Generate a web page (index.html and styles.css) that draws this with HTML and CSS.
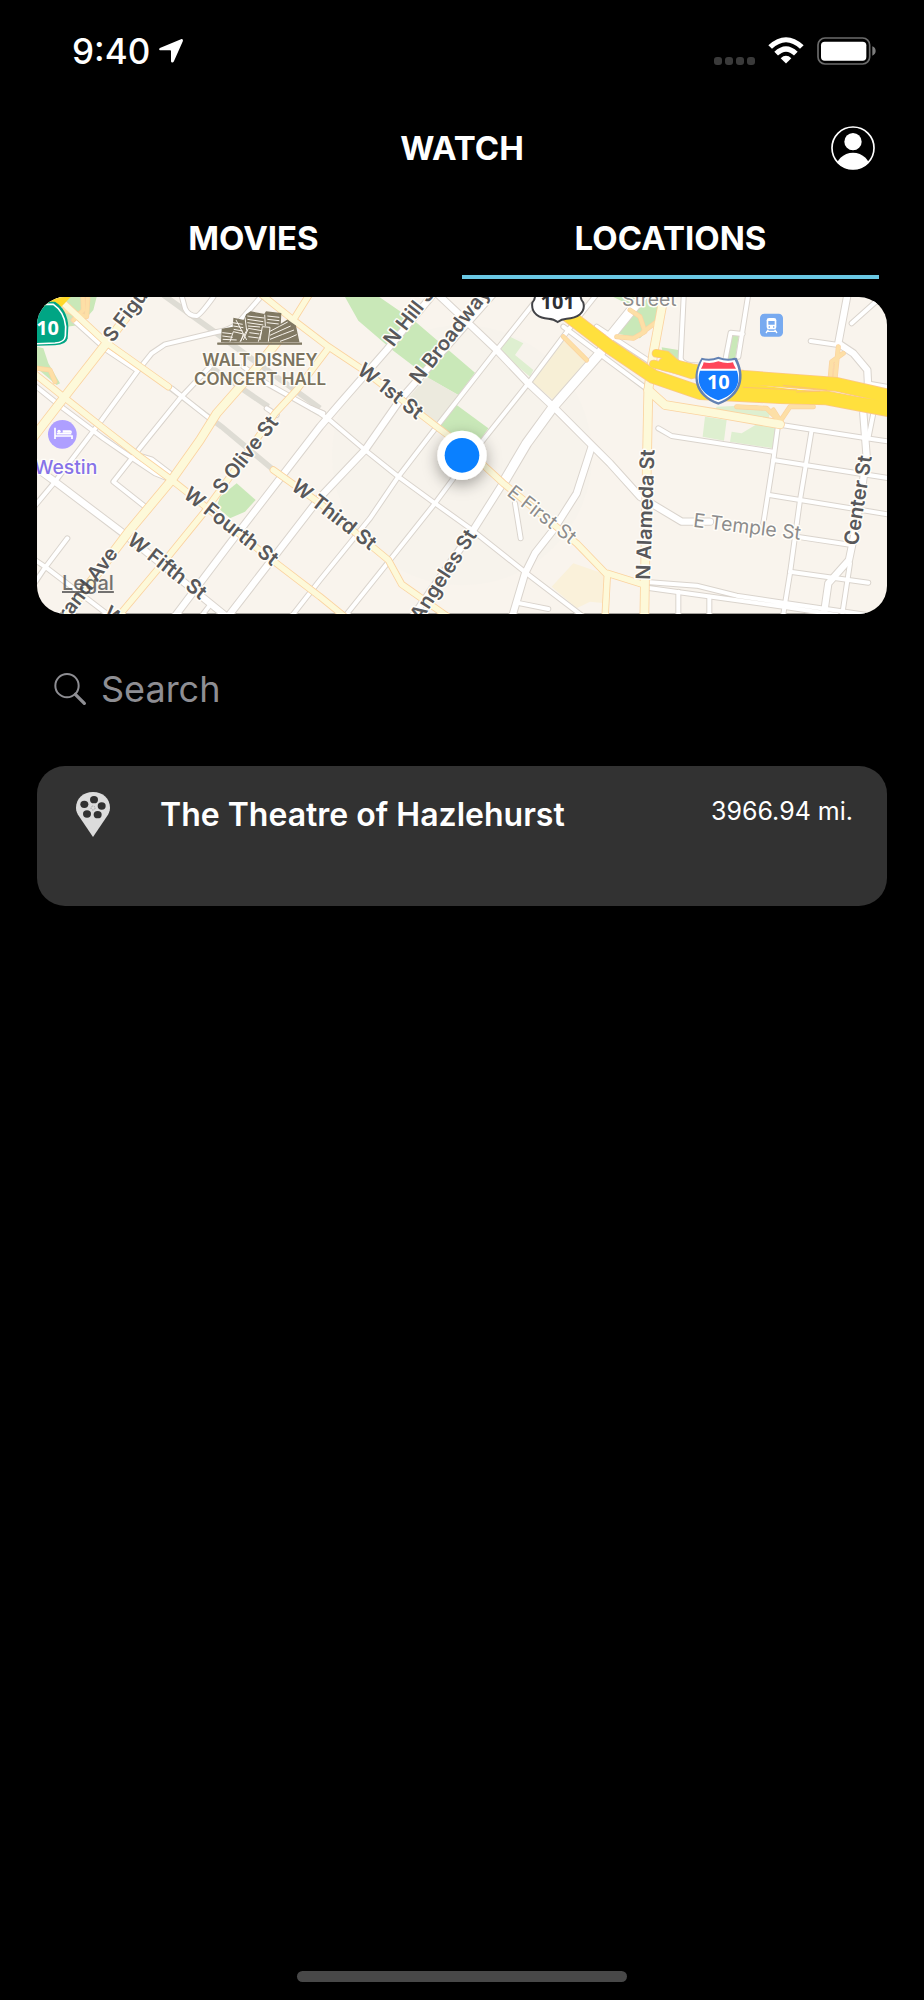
FILE: index.html
```html
<!DOCTYPE html>
<html lang="en">
<head>
    <meta charset="UTF-8">
    <meta name="viewport" content="width=device-width, initial-scale=1">
    <title>Watch - Locations</title>
    <link rel="stylesheet" href="styles.css">
</head>
<body>
    <div class="status-bar">
        <div class="clock">
            <span>9:40</span>
            <svg width="24" height="24" viewBox="0 0 24 24" fill="#fff" aria-hidden="true">
                <path d="M22 .2 1.5 8.8C-.5 9.700 0 11.300 1.500 11.300H11.200Q12 11.300 12 12.200V22C12 23.700 14 24.100 14.800 22.400L23.800 2.200C24.300.8 23.300-.3 22 .2Z"/>
            </svg>
        </div>
        <div class="indicators">
            <div class="signal"><i></i><i></i><i></i><i></i></div>
            <svg width="36" height="27" viewBox="0 0 108 80" aria-hidden="true">
                <path d="M1 24Q54-24 107 24L96 35Q54-4 12 35Z" fill="#fff"/>
                <path d="M19 44Q54 11 89 44L78 55Q54 32 30 55Z" fill="#fff"/>
                <path d="M38 63Q54 49 70 63L54 79Z" fill="#fff"/>
            </svg>
            <svg width="59" height="28" viewBox="0 0 177 84" aria-hidden="true">
                <rect x="3" y="3" width="155" height="78" rx="21" fill="none" stroke="#6b6b6b" stroke-width="5"/>
                <rect x="12" y="14" width="136" height="57" rx="11" fill="#fff"/>
                <path d="M166 28Q176 32 176 42T166 56Z" fill="#7d7d7d"/>
            </svg>
        </div>
    </div>

    <header class="header">
        <h1>WATCH</h1>
        <button type="button" class="profile" aria-label="Profile">
            <svg width="44" height="44" viewBox="0 0 132 132" aria-hidden="true">
                <clipPath id="avatar"><circle cx="66" cy="66" r="64"/></clipPath>
                <circle cx="66" cy="66" r="63" fill="none" stroke="#fff" stroke-width="5"/>
                <g clip-path="url(#avatar)" fill="#fff">
                    <circle cx="66" cy="47" r="26"/>
                    <circle cx="66" cy="133" r="53"/>
                </g>
            </svg>
        </button>
    </header>

    <nav class="tabs">
        <a href="#movies">MOVIES</a>
        <a href="#locations" class="active">LOCATIONS</a>
    </nav>

    <main>
        <div class="map">
            <svg viewBox="21 21 2550 950" role="img" aria-label="Map of downtown Los Angeles">
                <defs>
                    <filter id="shadow" x="-50%" y="-50%" width="200%" height="200%">
                        <feDropShadow dx="0" dy="14" stdDeviation="22" flood-color="#000" flood-opacity=".35"/>
                    </filter>
                    <g id="minor">
                        <path d="M450 0 465 55Q475 78 500 78Q510 76 550 21"/>
                        <path d="M710 0 625 98Q600 120 560 126L405 163 365 190 325 240 215 390 75 575 0 665"/>
                        <path d="M540 230 450 325 325 480 250 575 345 650"/>
                        <path d="M130 90 230 180 320 240M425 295 545 390M0 275 100 355 220 445 300 500 375 550 425 570"/>
                        <path d="M320 495 365 508 420 550"/>
                        <path d="M112 745 40 840 0 900M0 800 45 830 230 971M540 945 520 971"/>
                        <path d="M640 230 710 280 870 370 905 395 1005 480 1105 560 1215 640 1320 715 1490 850 1660 980"/>
                        <path d="M710 355 740 375M845 355 880 370"/>
                        <path d="M780 985 870 870 1020 685 1105 560 1220 410 1400 180 1515 35"/>
                        <path d="M940 985 1080 810 1215 640 1300 525 1495 280 1615 120 1710 0"/>
                        <path d="M1455 640 1472 745M1470 940 1555 957"/>
                        <path d="M1600 110 1740 215 1855 300M1700 110 1860 215"/>
                        <path d="M1962 0 1952 205Q1955 220 1980 225L2030 228M2085 215 2102 128 2138 132M2157 0 2125 200"/>
                        <path d="M2342 153 2425 165M2465 100 2560 15M2510 280 2580 292"/>
                        <path d="M2240 403 2510 445 2580 455M2245 400 2230 510 2200 700"/>
                        <path d="M2345 420 2310 630 2280 850 2258 985M1885 415 1925 438 2230 485"/>
                        <path d="M2230 510 2580 565M2218 615 2580 674M2280 845 2515 878"/>
                        <path d="M1840 875 2000 887 2120 917 2260 938 2580 985M1840 892 2260 950 2420 975"/>
                        <path d="M1945 905V985M2038 920V985M2530 370 2515 445M2460 820 2435 985M2300 740 2465 765"/>
                    </g>
                    <g id="major">
                        <path d="M0 520 75 575 280 730 540 940 590 980"/>
                        <path d="M430 985 600 760 870 410 930 340 1070 180 1220 0"/>
                        <path d="M590 985 870 622 1005 480 1110 330 1320 90 1400 0"/>
                        <path d="M1210 0 1300 85 1400 180 1495 280 1575 355 1690 470 1740 520 1830 620 1955 695 2040 695"/>
                        <path d="M1685 470 1640 610 1570 720 1515 790 1485 850 1445 985"/>
                        <path d="M2455 0 2425 160 2470 190 2512 240 2515 300M2500 370 2510 500 2480 700 2457 810 2395 880 2380 985"/>
                        <path d="M1145 985 1330 720 1425 570"/>
                    </g>
                    <g id="wide">
                        <path d="M1425 570 1490 460 1570 350 1710 190 1740 140 1845 10"/>
                    </g>
                    <g id="arterial">
                        <path d="M85 25 225 155 415 290"/>
                        <path d="M690 10 790 90 895 170 1000 240 1220 410 1300 470 1420 580 1640 760 1732 855 1725 985M1732 850 1845 885"/>
                        <path d="M790 90 840 10M260 985 390 830 520 670 600 560 735 370 800 300 895 175"/>
                        <path d="M730 540 870 640 1075 810 1115 883 1260 985"/>
                        <path d="M0 240 100 320 220 415 330 500 425 570 520 645 700 790 870 920 950 985"/>
                    </g>
                    <g id="avenue">
                        <path d="M0 455 100 325 225 165 350 0"/>
                        <path d="M100 985 300 720 425 570 510 450 560 370 670 245 790 95"/>
                        <path d="M1905 0 1870 190 1855 300 1850 560 1843 985"/>
                        <path d="M1855 300 1905 345 2060 370 2250 403"/>
                    </g>
                    <g id="ramps">
                        <path d="M158 0 160 60 130 90M175 0 170 80 100 60M21 235 60 240 75 275"/>
                        <path d="M1760 140 1810 145 1845 125 1830 80 1800 60M1840 125 1880 95M1600 140 1670 210"/>
                        <path d="M2400 270 2405 215 2440 190M2415 270 2425 170M2120 350 2210 355 2250 395 2280 350 2350 350M2230 360 2255 400"/>
                    </g>
                    <g id="freeway">
                        <path d="M1600 65 1740 172 1870 260 2010 308 2250 320 2390 324 2590 362"/>
                        <path d="M1905 222 1990 243 2140 262 2420 283 2590 322"/>
                    </g>
                    <g id="connector">
                        <path d="M1870 222 1925 235 1985 255M1878 190 1910 195 1960 240"/>
                    </g>
                </defs>

                <!-- land, parks and plazas -->
                <rect x="21" y="21" width="2550" height="950" fill="#f9f4ed"/>
                <circle cx="1296" cy="496" r="390" fill="#f7f3ec"/>
                <g fill="#c9e8b8">
                    <path d="M945 21H1048L1160 98 1335 248 1285 315 1190 262 1155 232 1090 182 985 92Z"/>
                    <path d="M1280 345 1375 415 1330 480 1230 405Z"/>
                    <path d="M570 620 620 580 677 630 645 665 600 685 560 650Z"/>
                    <path d="M21 170 40 175 55 220 90 280 80 285 21 235ZM90 21 200 21 190 60 150 105 110 110Z"/>
                    <path d="M1750 21H1900L1880 95 1830 145 1755 130 1810 50ZM1895 172 1945 180 1955 225 1900 200Z"/>
                    <path d="M2105 135H2127L2115 210H2090Z"/>
                </g>
                <g fill="#deefd0">
                    <path d="M1430 135 1480 160 1455 195 1510 240 1500 260 1410 185Z"/>
                    <path d="M2025 380 2090 390 2082 452 2018 440ZM2105 425 2135 430 2180 403 2242 410 2230 475 2100 455ZM2060 350 2180 345 2222 365 2215 388 2050 370Z"/>
                </g>
                <path d="M1595 150 1660 190 1685 225 1570 330 1505 275Z" fill="#f7efd6"/>
                <path d="M1565 890 1630 820 1732 855 1725 940 1680 935 1640 955Z" fill="#faf1da"/>
                <path d="M1190 260 1285 315 1225 400 1130 330Z" fill="#eceade"/>

                <!-- tunnels -->
                <path d="M400 15 560 130 870 355M540 230 715 350M415 290 575 410 725 535" fill="none" stroke="#dedcd4" stroke-width="17"/>

                <!-- roads, each drawn as a casing with the surface over it -->
                <g fill="none" stroke-linecap="round" stroke-linejoin="round">
                    <g stroke="#dad4cd">
                        <use href="#minor" stroke-width="18"/>
                        <use href="#major" stroke-width="25"/>
                        <use href="#wide" stroke-width="33"/>
                    </g>
                    <g stroke="#fff">
                        <use href="#minor" stroke-width="12"/>
                        <use href="#major" stroke-width="19"/>
                        <use href="#wide" stroke-width="27"/>
                    </g>
                    <g stroke="#fbd3a0">
                        <use href="#ramps" stroke-width="15"/>
                        <use href="#arterial" stroke-width="22"/>
                        <use href="#avenue" stroke-width="29"/>
                    </g>
                    <use href="#ramps" stroke="#fddfa6" stroke-width="11"/>
                    <g stroke="#fdf9d9">
                        <use href="#arterial" stroke-width="17"/>
                        <use href="#avenue" stroke-width="24"/>
                    </g>
                    <g stroke="#fbc887">
                        <use href="#freeway" stroke-width="44"/>
                        <use href="#connector" stroke-width="26"/>
                    </g>
                    <path d="M2130 288 2580 344" stroke="#ffe03d" stroke-width="20"/>
                    <g stroke="#ffe03d">
                        <use href="#freeway" stroke-width="39"/>
                        <use href="#connector" stroke-width="21"/>
                    </g>
                    <path d="M2140 292 2300 300M2260 286 2390 300M2300 306 2370 304" stroke="#fbc46f" stroke-width="3"/>
                </g>
                <path d="M21 21H122L90 55 21 50Z" fill="#ffd928"/>

                <!-- street names -->
                <g class="street">
                    <text transform="translate(248 160) rotate(-53)">S Figu</text>
                    <text transform="translate(577 616) rotate(-52)">S Olive St</text>
                    <text transform="translate(457 620) rotate(38)">W Fourth St</text>
                    <text transform="translate(288 758) rotate(38)">W Fifth St</text>
                    <text transform="translate(780 596) rotate(38)">W Third St</text>
                    <text transform="translate(266 791) rotate(-53)" text-anchor="end">rand Ave</text>
                    <text transform="translate(216 977) rotate(38)">W</text>
                    <text transform="translate(1090 173) rotate(-52)">N Hill S</text>
                    <text transform="translate(1168 286) rotate(-52)">N Broadway</text>
                    <text transform="translate(978 248) rotate(38)">W 1st St</text>
                    <text transform="translate(1342 735) rotate(-57)" text-anchor="end">Angeles St</text>
                    <text transform="translate(1860 870) rotate(-88)">N Alameda St</text>
                    <text transform="translate(2483 768) rotate(-81)">Center St</text>
                </g>
                <g class="street light">
                    <text transform="translate(1428 614) rotate(38)">E First St</text>
                    <text transform="translate(1988 710) rotate(7)">E Temple St</text>
                    <text x="1776" y="47">Street</text>
                </g>

                <!-- concert hall -->
                <g>
                    <path d="M562 162H816M575 155 577 118 610 112 612 86 642 92 650 74 662 66 704 74 709 66 752 71 750 105 772 91 796 108 806 155Z" fill="#817963" stroke="#817963" stroke-width="4"/>
                    <g fill="none" stroke="#f9f4ed" stroke-width="3">
                        <path d="M577 128 605 131M577 138 608 142M578 148 620 150M608 98 638 103M610 108 640 113M611 118 638 123M618 90 650 150"/>
                        <path d="M652 78 702 84M652 88 700 95M652 98 700 105M654 108 690 111M645 82 650 122 630 155"/>
                        <path d="M712 78 748 82M712 88 748 92M710 98 746 102M704 74 706 108"/>
                        <path d="M600 155 610 125 640 132 632 155M640 150 655 115 695 122 685 155M690 150 697 110 720 112 715 155"/>
                        <path d="M658 128 688 132M655 140 686 144M720 124Q750 108 773 96M720 136Q755 120 782 108M720 148Q760 132 792 120M750 154Q780 144 800 134"/>
                    </g>
                    <path d="M562 160H816" stroke="#817963" stroke-width="5"/>
                    <text class="place" x="690" y="228">WALT DISNEY</text>
                    <text class="place" x="690" y="285">CONCERT HALL</text>
                </g>

                <!-- hotel -->
                <circle cx="97" cy="433" r="43" fill="#ae9fff"/>
                <path d="M75 413V447M75 438H126V447M80 431H124" fill="none" stroke="#fff" stroke-width="5"/>
                <path d="M98 421H120Q126 421 126 428H98Z" fill="#fff"/>
                <circle cx="87" cy="424" r="5" fill="#fff"/>
                <text class="hotel" x="202" y="551">Westin</text>

                <!-- train station -->
                <rect x="2190" y="71" width="69" height="69" rx="13" fill="#78aaf0"/>
                <rect x="2210" y="84" width="29" height="34" rx="7" fill="#fff"/>
                <path d="M2215 93H2234V104H2215ZM2216 109H2220V113H2216ZM2229 109H2233V113H2229Z" fill="#78aaf0"/>
                <path d="M2215 119 2208 129M2234 119 2241 129M2212 124H2237" stroke="#fff" stroke-width="4"/>

                <!-- route shields -->
                <path d="M0 35H75Q112 58 115 110L113 145Q110 164 75 166L0 168Z" fill="#00a584"/>
                <path d="M0 43H70Q103 65 107 110L106 138Q104 157 75 159L0 162" fill="none" stroke="#fff" stroke-width="5"/>
                <text class="shield" x="87" y="136" text-anchor="end">10</text>
                <path d="M1512 0Q1520 25 1507 38C1502 72 1530 85 1555 86Q1572 87 1583 96Q1594 87 1610 86C1640 84 1668 70 1660 38Q1646 22 1656 0Z" fill="#fff" stroke="#424347" stroke-width="6"/>
                <text class="shield us" x="1583" y="56" text-anchor="middle">101</text>
                <path d="M2015 203Q2040 211 2065 200Q2091 211 2113 203L2120 204C2148 256 2140 319 2065 344C1990 319 1982 256 2015 203Z" fill="#6482b3"/>
                <path d="M2017 210Q2042 216 2065 207Q2090 216 2114 210C2141 260 2128 313 2065 337C2002 313 1989 260 2017 210Z" fill="#fff"/>
                <path d="M2013 236Q2020 226 2021 217Q2043 222 2065 214Q2088 222 2109 217Q2111 226 2118 236Z" fill="#ff475a"/>
                <path d="M2010 242H2121C2134 282 2115 314 2065 331C2016 314 1997 282 2010 242Z" fill="#147bff"/>
                <text class="shield" x="2065" y="297" text-anchor="middle">10</text>

                <!-- current position -->
                <circle cx="1296" cy="496" r="74" fill="#fff" filter="url(#shadow)"/>
                <circle cx="1296" cy="496" r="52" fill="#0a80ff"/>
            </svg>
            <a href="#legal" class="legal">Legal</a>
        </div>

        <form class="search" role="search">
            <label for="search" aria-label="Search">
                <svg width="33" height="33" viewBox="0 0 99 99" fill="none" stroke="#8e8e93" aria-hidden="true">
                    <circle cx="39" cy="38" r="35" stroke-width="6"/>
                    <path d="M64 64 91 91" stroke-width="10" stroke-linecap="round"/>
                </svg>
            </label>
            <input type="search" id="search" name="search" placeholder="Search">
        </form>

        <article class="theatre">
            <svg class="pin" width="34" height="45" viewBox="0 0 102 135" aria-hidden="true">
                <path d="M51 0C21 0 0 20 0 47C0 57 4 65 9 73L51 135 93 73C98 65 102 57 102 47C102 20 81 0 51 0Z" fill="#dcdcdc"/>
                <g fill="#323232">
                    <ellipse cx="54" cy="23" rx="12" ry="11"/>
                    <ellipse cx="25" cy="37" rx="12" ry="11"/>
                    <ellipse cx="77" cy="42" rx="12" ry="11"/>
                    <ellipse cx="33" cy="66" rx="12" ry="11"/>
                    <ellipse cx="65" cy="68" rx="12" ry="11"/>
                </g>
                <circle cx="51" cy="48" r="6" fill="none" stroke="#a0a0a0" stroke-width="3" stroke-dasharray="4 3"/>
            </svg>
            <h2>The Theatre of Hazlehurst</h2>
            <span class="distance">3966.94 mi.</span>
        </article>
    </main>

    <div class="home-indicator"></div>
</body>
</html>
```

FILE: styles.css
```css
* {
    box-sizing: border-box;
}
body {
    display: flex;
    flex-direction: column;
    min-height: 100vh;
    margin: 0;
    background-color: #000;
    color: #fff;
    font-family: Inter, "Liberation Sans", sans-serif;
}
svg {
    display: block;
}
.status-bar {
    display: flex;
    justify-content: space-between;
    align-items: center;
    height: 101px;
    padding: 0 48px 0 72px;
}
.clock {
    display: flex;
    align-items: center;
    gap: 9px;
    font-size: 35px;
    font-weight: 500;
}
.indicators {
    display: flex;
    align-items: center;
    gap: 13px;
}
.signal {
    display: flex;
    align-self: flex-end;
    gap: 3px;
}
.signal i {
    width: 8px;
    height: 8px;
    border-radius: 3px;
    background-color: #3a3a3a;
}
.header {
    display: grid;
    grid-template-columns: 1fr auto 1fr;
    align-items: center;
    height: 94px;
    padding: 0 49px;
}
h1 {
    grid-column: 2;
    margin: 0;
    font-size: 33px;
    font-weight: 700;
}
.profile {
    justify-self: end;
    padding: 0;
    border: none;
    background: none;
    cursor: pointer;
}
.tabs {
    display: grid;
    grid-template-columns: 1fr 1fr;
    margin: 0 45px;
}
.tabs a {
    height: 84px;
    border-bottom: 4px solid transparent;
    color: #fff;
    font-size: 33px;
    font-weight: 700;
    line-height: 86px;
    text-align: center;
    text-decoration: none;
}
.tabs a.active {
    border-bottom-color: #6ac8e4;
}
main {
    padding: 18px 37px;
}
.map {
    position: relative;
    overflow: hidden;
    border-radius: 28px;
}
.map svg {
    width: 100%;
    height: auto;
}
.street {
    fill: #58585a;
    stroke: #fffdf8;
    stroke-width: 9px;
    stroke-linejoin: round;
    paint-order: stroke;
    font-size: 60px;
    font-weight: 600;
}
.street.light {
    fill: #8c8c8c;
    font-size: 58px;
    font-weight: 400;
}
.place {
    fill: #7b735e;
    stroke: #fffdf8;
    stroke-width: 8px;
    paint-order: stroke;
    font-size: 51px;
    font-weight: 600;
    text-anchor: middle;
}
.hotel {
    fill: #8673e8;
    stroke: #fffdf8;
    stroke-width: 8px;
    paint-order: stroke;
    font-size: 58px;
    font-weight: 500;
    text-anchor: end;
}
.shield {
    fill: #fff;
    font-family: "Open Sans", sans-serif;
    font-size: 60px;
    font-weight: 700;
}
.shield.us {
    fill: #2e2f33;
}
.legal {
    position: absolute;
    left: 25px;
    bottom: 19px;
    color: rgba(70, 70, 70, 0.75);
    font-size: 20px;
    font-weight: 500;
}
.search {
    display: flex;
    align-items: center;
    gap: 14px;
    height: 152px;
    padding: 0 17px;
}
.search input {
    flex: 1;
    min-width: 0;
    padding: 0 0 2px;
    border: none;
    outline: none;
    background: none;
    color: #fff;
    font-family: inherit;
    font-size: 36px;
}
.search input::placeholder {
    color: #8e8e93;
}
.theatre {
    display: flex;
    align-items: flex-start;
    min-height: 140px;
    padding: 26px 34px 26px 39px;
    border-radius: 28px;
    background-color: #323232;
}
.theatre .pin {
    flex: none;
    margin-right: 50px;
}
.theatre h2 {
    flex: 1;
    margin: 0;
    font-size: 32px;
    font-weight: 600;
    line-height: 46px;
}
.distance {
    font-size: 25px;
    line-height: 38px;
}
.home-indicator {
    width: 330px;
    max-width: 40%;
    height: 11px;
    margin: auto auto 18px;
    border-radius: 6px;
    background-color: #484848;
}
```
